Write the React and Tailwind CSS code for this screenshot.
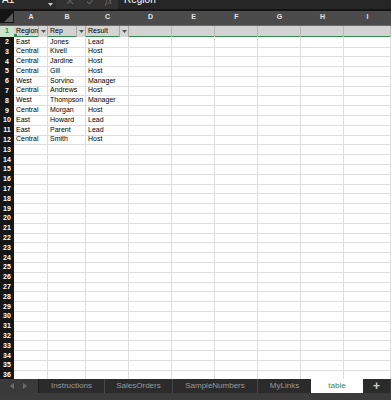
import React from "react";

const data = [
  ["East", "Jones", "Lead"],
  ["Central", "Kivell", "Host"],
  ["Central", "Jardine", "Host"],
  ["Central", "Gill", "Host"],
  ["West", "Sorvino", "Manager"],
  ["Central", "Andrews", "Host"],
  ["West", "Thompson", "Manager"],
  ["Central", "Morgan", "Host"],
  ["East", "Howard", "Lead"],
  ["East", "Parent", "Lead"],
  ["Central", "Smith", "Host"],
];

const cols = ["A", "B", "C", "D", "E", "F", "G", "H", "I", ""];
const gridCols = "grid grid-cols-[14px_34px_38px_43px_43px_43px_43px_43px_43px_1fr]";

function FilterBtn() {
  return (
    <div className="flex h-full w-[9px] shrink-0 items-center justify-center border-l border-[#a9a9a9] bg-[#d6d6d6]">
      <svg width="5" height="3" viewBox="0 0 5 3">
        <polygon points="0,0 5,0 2.5,3" fill="#555" />
      </svg>
    </div>
  );
}

export default function App() {
  const rows = [];
  for (let r = 2; r <= 36; r++) rows.push(r);
  return (
    <div
      className="flex h-[400px] w-[391px] flex-col overflow-hidden bg-white"
      style={{ fontFamily: '"Liberation Sans", Arial, sans-serif' }}
    >
      {/* formula bar */}
      <div className="flex h-[9px] shrink-0 overflow-hidden bg-[#323232]">
        <div className="relative flex w-[56px] shrink-0 bg-[#2a2a2a]">
          <span className="mt-[-6px] ml-[2px] text-[10px] leading-[12px] text-white">A1</span>
          <svg className="absolute left-[48px] top-[3px]" width="5" height="3" viewBox="0 0 5 3">
            <polygon points="0,0 5,0 2.5,3" fill="#cfcfcf" />
          </svg>
        </div>
        <div className="flex w-[62px] shrink-0 items-start text-[#5a5a5a]">
          <svg className="ml-[10px] mt-[-3px]" width="8" height="8" viewBox="0 0 8 8">
            <path d="M1 1 L7 7 M7 1 L1 7" stroke="#5c5c5c" strokeWidth="1.1" />
          </svg>
          <svg className="ml-[12px] mt-[-3px]" width="9" height="8" viewBox="0 0 9 8">
            <path d="M1 4.5 L3.5 7 L8 1" stroke="#5c5c5c" strokeWidth="1.1" fill="none" />
          </svg>
          <span className="ml-[10px] mt-[-5px] text-[10px] italic leading-[12px] text-[#6a6a6a]" style={{ fontFamily: '"Liberation Serif", serif' }}>fx</span>
        </div>
        <div className="flex flex-1 bg-[#262626]">
          <span className="mt-[-6px] ml-[6px] text-[10px] leading-[12px] text-white">Region</span>
        </div>
      </div>
      <div className="h-[2px] shrink-0 bg-[#141414]" />
      {/* column headers */}
      <div className={`${gridCols} h-[14px] shrink-0 bg-[#4b4b4b]`}>
        <div className="relative bg-[#141414]">
          <svg className="absolute bottom-[1px] right-[1px]" width="9" height="9" viewBox="0 0 9 9">
            <polygon points="9,0 9,9 0,9" fill="#5a5a5a" />
          </svg>
        </div>
        {cols.map((c, i) => (
          <div key={i} className="flex items-center justify-center text-[7px] font-bold text-[#e4e4e4]">
            {c}
          </div>
        ))}
      </div>
      <div className="h-px shrink-0 bg-[#2f8a4c]" />
      {/* row 1 */}
      <div className={`${gridCols} relative h-[10px] shrink-0 bg-[#d3d3d3]`}>
        <div className="flex items-center justify-center bg-[#cde3cd] text-[7px] font-bold text-[#2f8a4c]">1</div>
        {["Region", "Rep", "Result"].map((t, i) => (
          <div key={i} className="flex items-center border-r border-[#a9a9a9] text-[7px] text-black">
            <span className="flex-1 pl-[2px]">{t}</span>
            <FilterBtn />
          </div>
        ))}
        {[0, 1, 2, 3, 4, 5, 6].map((i) => (
          <div key={i} className="border-r border-[#b9b9b9]" />
        ))}
        <div className="absolute left-[14px] top-[8px] h-[3px] w-[3px] bg-[#2f8a4c]" />
      </div>
      <div className="h-px shrink-0 bg-[#2f8a4c]" />
      {/* rows */}
      <div className="flex-1 overflow-hidden">
        {rows.map((r) => {
          const d = data[r - 2] || ["", "", ""];
          return (
            <div key={r} className={`${gridCols} h-[9.8px]`}>
              <div className="flex items-center justify-center bg-[#161616] text-[7px] font-bold text-white">{r}</div>
              {d.map((t, i) => (
                <div key={i} className="flex items-center overflow-hidden whitespace-nowrap border-r border-b border-[#dedede] pl-[2px] text-[7px] text-black">
                  {t}
                </div>
              ))}
              {[0, 1, 2, 3, 4, 5, 6].map((i) => (
                <div key={i} className="border-r border-b border-[#dedede]" />
              ))}
            </div>
          );
        })}
      </div>
      {/* sheet tabs */}
      <div className="flex h-[14px] shrink-0 bg-[#2b2b2b] text-[8px] text-[#9a9a9a]">
        <div className="flex w-[39px] items-center gap-[9px] border-r border-[#1e1e1e] bg-[#3a3a3a] pl-[10px]">
          <svg width="4" height="6" viewBox="0 0 4 6">
            <polygon points="4,0 4,6 0,3" fill="#6c6c6c" />
          </svg>
          <svg width="4" height="6" viewBox="0 0 4 6">
            <polygon points="0,0 0,6 4,3" fill="#6c6c6c" />
          </svg>
        </div>
        <div className="flex w-[66px] items-center justify-center border-r border-[#474747]">Instructions</div>
        <div className="flex w-[68px] items-center justify-center border-r border-[#474747]">SalesOrders</div>
        <div className="flex w-[85px] items-center justify-center border-r border-[#474747]">SampleNumbers</div>
        <div className="flex w-[53px] items-center justify-center">MyLinks</div>
        <div className="flex w-[52px] items-center justify-center bg-white text-[#2f8a4c]">table</div>
        <div className="flex w-[27px] items-center justify-center text-[12px] font-bold text-[#d0d0d0]">+</div>
        <div className="flex-1 bg-[#3a3a3a]" />
      </div>
      <div className="h-[7px] shrink-0 bg-[#3c3c3c]" />
    </div>
  );
}
